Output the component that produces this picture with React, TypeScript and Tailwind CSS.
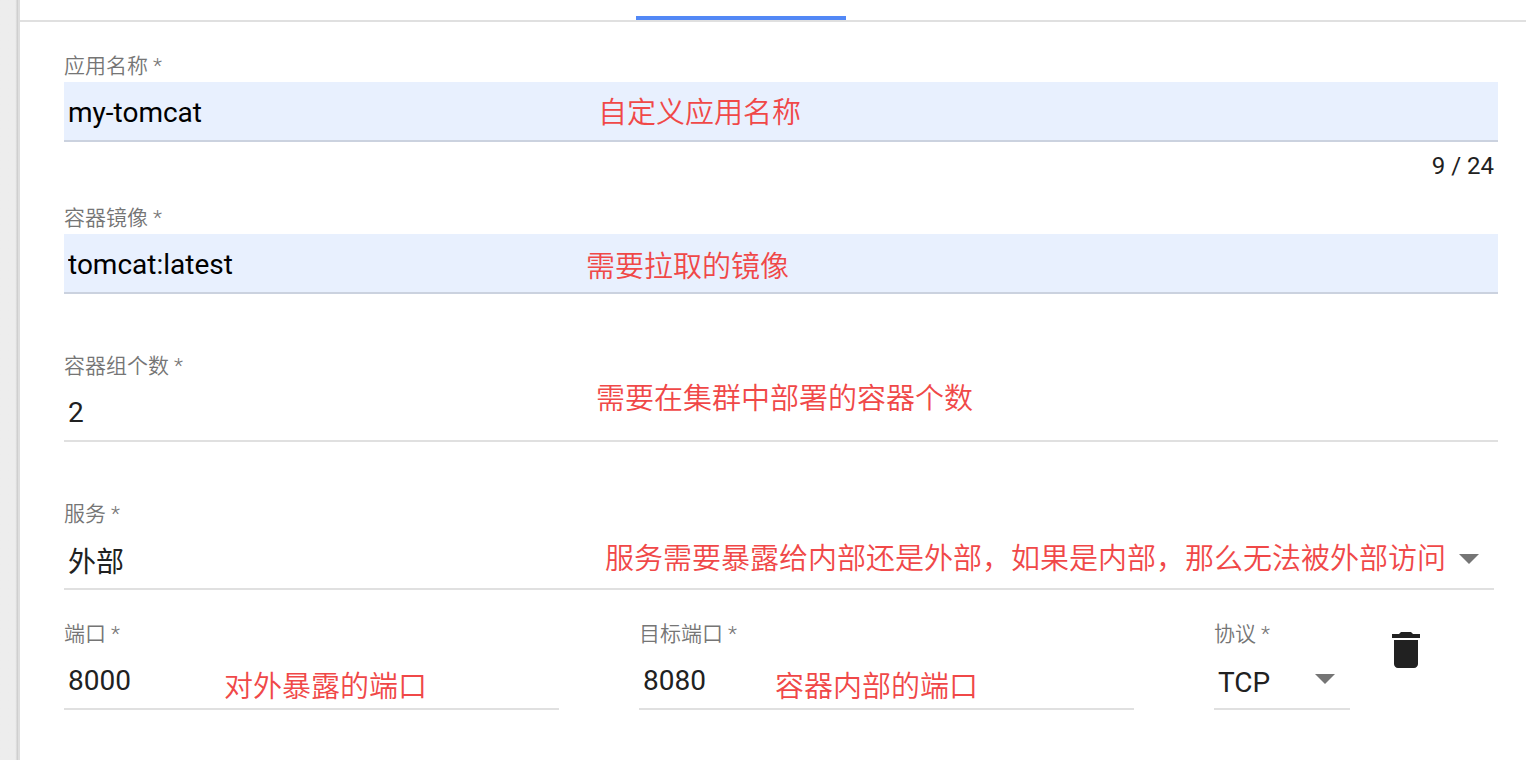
import React, { FC, InputHTMLAttributes, ReactNode, SelectHTMLAttributes } from "react";

import { clsx } from "clsx";

const control =
  "block h-[60px] w-full appearance-none rounded-none border-b-2 border-black/12 px-1 text-[28px] leading-[40px] outline-none focus:border-[#5288f6]";

interface FieldProps {
  id: string;
  label: string;
  className?: string;
  hint?: ReactNode;
  children: ReactNode;
}

const Field: FC<FieldProps> = ({ id, label, className, hint, children }) => {
  return (
    <div className={className}>
      <label
        htmlFor={id}
        className="block h-[30px] text-[21px] leading-[28px] font-[350] text-[#757575]"
      >
        {label} *
      </label>

      <div className="relative">
        {children}
        {hint}
      </div>
    </div>
  );
};

interface HintProps {
  className: string;
  children: ReactNode;
}

const Hint: FC<HintProps> = ({ className, children }) => (
  <span
    className={clsx(
      "pointer-events-none absolute whitespace-nowrap text-[29px] leading-[42px] font-[350] text-[#f04848]",
      className
    )}
  >
    {children}
  </span>
);

interface TextInputProps extends InputHTMLAttributes<HTMLInputElement> {
  autofilled?: boolean;
}

const TextInput: FC<TextInputProps> = ({ autofilled, ...rest }) => (
  <input
    type="text"
    className={clsx(
      control,
      "pt-0.5",
      autofilled ? "bg-[#e8f0fe] text-black" : "bg-transparent text-[#212121]"
    )}
    {...rest}
  />
);

const Select: FC<SelectHTMLAttributes<HTMLSelectElement>> = ({
  children,
  ...rest
}) => (
  <>
    <select
      className={clsx(control, "bg-transparent pt-2 text-[#212121]")}
      {...rest}
    >
      {children}
    </select>
    <svg
      viewBox="0 0 20 10"
      className="pointer-events-none absolute top-6 right-[15px] h-[10px] w-5 fill-[#757575]"
      aria-hidden="true"
    >
      <path d="M0 0h20L10 10z" />
    </svg>
  </>
);

const App: FC = () => {
  return (
    <div className="flex min-h-screen bg-white font-['Roboto','Noto_Sans_CJK_SC',sans-serif]">
      <aside className="w-5 shrink-0 border-r-2 border-[#dedede] bg-linear-to-r from-[#ededed] from-85% to-[#c8c8c8]" />

      <main className="min-w-0 flex-1">
        <div className="flex h-[22px] items-end justify-center border-b-2 border-[#e0e0e0] pr-16">
          <div className="h-1 w-[210px] bg-[#5288f6]" />
        </div>

        <form className="pt-[30px] pr-7 pl-11">
          <Field
            id="name"
            label="应用名称"
            hint={<Hint className="top-[10px] left-[534px]">自定义应用名称</Hint>}
          >
            <TextInput id="name" defaultValue="my-tomcat" maxLength={24} autofilled />
          </Field>
          <div className="mb-[14px] pr-1 text-right text-2xl leading-[48px] text-[#212121]">
            9 / 24
          </div>

          <Field
            id="image"
            label="容器镜像"
            hint={<Hint className="top-3 left-[522px]">需要拉取的镜像</Hint>}
          >
            <TextInput id="image" defaultValue="tomcat:latest" autofilled />
          </Field>

          <Field
            id="replicas"
            label="容器组个数"
            className="mt-[58px]"
            hint={
              <Hint className="-top-1 left-[532px]">需要在集群中部署的容器个数</Hint>
            }
          >
            <TextInput id="replicas" inputMode="numeric" defaultValue="2" />
          </Field>

          <Field
            id="service"
            label="服务"
            className="mt-[58px] mr-1"
            hint={
              <Hint className="top-2 right-[48px]">
                服务需要暴露给内部还是外部，如果是内部，那么无法被外部访问
              </Hint>
            }
          >
            <Select id="service" defaultValue="external">
              <option value="external">外部</option>
              <option value="internal">内部</option>
            </Select>
          </Field>

          <div className="mt-[30px] flex items-start gap-20">
            <Field
              id="port"
              label="端口"
              className="flex-1"
              hint={<Hint className="top-4 left-[160px]">对外暴露的端口</Hint>}
            >
              <TextInput id="port" inputMode="numeric" defaultValue="8000" />
            </Field>

            <Field
              id="target-port"
              label="目标端口"
              className="flex-1"
              hint={<Hint className="top-4 left-[136px]">容器内部的端口</Hint>}
            >
              <TextInput id="target-port" inputMode="numeric" defaultValue="8080" />
            </Field>

            <div className="flex w-[284px] items-start gap-8">
              <Field id="protocol" label="协议" className="w-[136px]">
                <Select id="protocol" defaultValue="TCP">
                  <option>TCP</option>
                  <option>UDP</option>
                </Select>
              </Field>

              <button type="button" aria-label="删除" className="mt-[6px]">
                <svg viewBox="0 0 24 24" className="size-12 fill-[#212121]">
                  <path d="M6 19c0 1.1.9 2 2 2h8c1.1 0 2-.9 2-2V7H6v12zM19 4h-3.5l-1-1h-5l-1 1H5v2h14V4z" />
                </svg>
              </button>
            </div>
          </div>
        </form>
      </main>
    </div>
  );
};

export default App;
